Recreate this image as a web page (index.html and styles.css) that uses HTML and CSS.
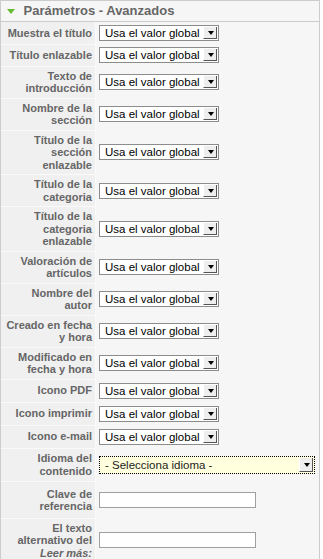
FILE: index.html
```html
<!DOCTYPE html>
<html lang="es">
<head>
  <meta charset="UTF-8">
  <title>Parámetros - Avanzados</title>
  <link rel="stylesheet" href="styles.css">
</head>
<body>

  <div class="panel">
    <h3 class="panel-title">
      <span class="toggle"></span>
      Parámetros - Avanzados
    </h3>

    <table class="paramlist">
      <tr>
        <td class="key">Muestra el título</td>
        <td class="value"><div class="sel"><select><option>Usa el valor global</option></select></div></td>
      </tr>
      <tr>
        <td class="key">Título enlazable</td>
        <td class="value"><div class="sel"><select><option>Usa el valor global</option></select></div></td>
      </tr>
      <tr>
        <td class="key">Texto de introducción</td>
        <td class="value"><div class="sel"><select><option>Usa el valor global</option></select></div></td>
      </tr>
      <tr>
        <td class="key">Nombre de la sección</td>
        <td class="value"><div class="sel"><select><option>Usa el valor global</option></select></div></td>
      </tr>
      <tr>
        <td class="key">Título de la sección enlazable</td>
        <td class="value"><div class="sel"><select><option>Usa el valor global</option></select></div></td>
      </tr>
      <tr>
        <td class="key">Título de la categoria</td>
        <td class="value"><div class="sel"><select><option>Usa el valor global</option></select></div></td>
      </tr>
      <tr>
        <td class="key">Título de la categoria enlazable</td>
        <td class="value"><div class="sel"><select><option>Usa el valor global</option></select></div></td>
      </tr>
      <tr>
        <td class="key">Valoración de artículos</td>
        <td class="value"><div class="sel"><select><option>Usa el valor global</option></select></div></td>
      </tr>
      <tr>
        <td class="key">Nombre del autor</td>
        <td class="value"><div class="sel"><select><option>Usa el valor global</option></select></div></td>
      </tr>
      <tr>
        <td class="key">Creado en fecha y hora</td>
        <td class="value"><div class="sel"><select><option>Usa el valor global</option></select></div></td>
      </tr>
      <tr>
        <td class="key">Modificado en fecha y hora</td>
        <td class="value"><div class="sel"><select><option>Usa el valor global</option></select></div></td>
      </tr>
      <tr class="roomy">
        <td class="key">Icono PDF</td>
        <td class="value"><div class="sel"><select><option>Usa el valor global</option></select></div></td>
      </tr>
      <tr class="roomy">
        <td class="key">Icono imprimir</td>
        <td class="value"><div class="sel"><select><option>Usa el valor global</option></select></div></td>
      </tr>
      <tr class="roomy">
        <td class="key">Icono e-mail</td>
        <td class="value"><div class="sel"><select><option>Usa el valor global</option></select></div></td>
      </tr>
      <tr class="roomy">
        <td class="key">Idioma del contenido</td>
        <td class="value"><div class="sel wide"><select><option>- Selecciona idioma -</option></select></div></td>
      </tr>
      <tr class="tall">
        <td class="key">Clave de referencia</td>
        <td class="value"><input type="text" class="text"></td>
      </tr>
      <tr class="last">
        <td class="key">El texto alternativo del <em>Leer más:</em></td>
        <td class="value"><input type="text" class="text"></td>
      </tr>
    </table>
  </div>

</body>
</html>
```

FILE: styles.css
```css
body {
  margin: 0;
  font-family: "Liberation Sans", Arial, sans-serif;
  background-color: #ffffff;
}
.panel {
  width: 318px;
  border: 1px solid #cccccc;
  border-bottom: none;
  background-color: #f6f6f6;
}
.panel-title {
  margin: 0;
  height: 20px;
  line-height: 20px;
  padding-left: 6px;
  font-size: 13px;
  font-weight: bold;
  color: #666666;
  border-bottom: 1px solid #cccccc;
}
.toggle {
  display: inline-block;
  width: 0;
  height: 0;
  margin-right: 5px;
  border-left: 4px solid transparent;
  border-right: 4px solid transparent;
  border-top: 5px solid #66bb33;
  vertical-align: 1px;
}
.paramlist {
  width: 100%;
  border-collapse: collapse;
}
.paramlist td {
  padding: 3px 3px;
  vertical-align: middle;
}
.paramlist .roomy td {
  padding-top: 3.5px;
  padding-bottom: 3.5px;
}
.paramlist .tall td {
  padding-top: 6px;
  padding-bottom: 5px;
}
.paramlist .last td {
  padding-top: 3px;
  padding-bottom: 5px;
}
.paramlist .key {
  width: 88px;
  padding-right: 3px;
  text-align: right;
  font-size: 11px;
  line-height: 12.5px;
  font-weight: bold;
  color: #666666;
  background-color: #f0f0f0;
  border-bottom: 1px solid #fafafa;
  border-right: 1px solid #fafafa;
}
.paramlist .key em {
  font-style: italic;
}
.paramlist .value {
  padding-left: 3px;
}
.sel {
  position: relative;
  width: 120px;
  height: 16px;
}
.sel select {
  appearance: none;
  -webkit-appearance: none;
  display: block;
  width: 100%;
  height: 16px;
  margin: 0;
  padding: 0 0 0 5px;
  font-family: "Liberation Sans", Arial, sans-serif;
  font-size: 11.5px;
  line-height: 14px;
  color: #000000;
  background-color: #ffffff;
  border: 1px solid #8c8c8c;
  border-radius: 0;
}
.sel::after {
  content: "";
  position: absolute;
  top: 2px;
  right: 2px;
  width: 14px;
  height: 12px;
  background-color: #eeeeee;
  border-left: 1px solid #ffffff;
  border-right: 1px solid #555555;
  border-bottom: 1px solid #555555;
  box-sizing: border-box;
  pointer-events: none;
}
.sel::before {
  content: "";
  position: absolute;
  top: 6px;
  right: 5px;
  z-index: 1;
  width: 0;
  height: 0;
  border-left: 3.5px solid transparent;
  border-right: 3.5px solid transparent;
  border-top: 4px solid #000000;
  pointer-events: none;
}
.sel.wide {
  width: 216px;
  height: 18px;
}
.sel.wide select {
  height: 18px;
  background-color: #ffffdd;
  border: 1px dotted #000000;
  color: #222222;
}
.sel.wide::before {
  top: 7px;
}
.sel.wide::after {
  height: 14px;
}
.text {
  display: block;
  width: 157px;
  height: 16px;
  margin: 0;
  padding: 0 3px;
  box-sizing: border-box;
  font-size: 12px;
  background-color: #ffffff;
  border: 1px solid #a0a0a0;
}
```
